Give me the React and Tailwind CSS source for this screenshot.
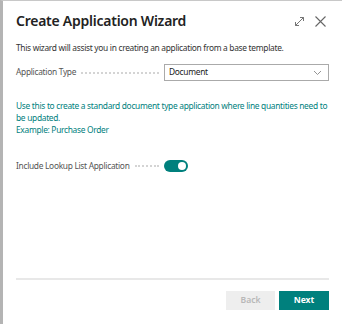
export default function App() {
  return (
    <div
      className="flex h-[324px] w-[342px] flex-col border-l-[3px] border-t border-l-[#b4b4b4] border-t-[#c8c8c8] bg-white pl-[13px] pr-[13px] text-[#212121]"
      style={{ fontFamily: '"Noto Sans", "Open Sans", sans-serif' }}
    >
      <div className="flex h-[38px] items-center justify-between pt-[2px]">
        <h1 className="text-[14px] font-semibold leading-none tracking-[-0.25px] text-[#222]">
          Create Application Wizard
        </h1>
        <div className="flex items-center gap-[9px] pr-[2px] text-[#666]">
          <svg width="11" height="11" viewBox="0 0 11 11" fill="none" stroke="currentColor" strokeWidth="0.9">
            <path d="M1.5 9.5 L9.5 1.5 M6 1.5 H9.5 V5 M1.5 6 V9.5 H5" />
          </svg>
          <svg width="13" height="13" viewBox="0 0 13 13" fill="none" stroke="currentColor" strokeWidth="1.1">
            <path d="M1.5 1.5 L11.5 11.5 M11.5 1.5 L1.5 11.5" />
          </svg>
        </div>
      </div>

      <div className="text-[8.4px] tracking-[-0.3px]">
        <p className="mt-[2px] leading-[14px] text-[#333]">
          This wizard will assist you in creating an application from a base template.
        </p>

        <div className="mt-[9px] flex items-center">
          <span className="text-[#555]">Application Type</span>
          <span className="mx-[5px] flex-1 border-b-2 border-dotted border-[#d4d4d4]" />
          <div className="flex h-[17px] w-[165px] items-center justify-between border border-[#aaa] pl-[4px] pr-[6px]">
            <span className="text-[#222]">Document</span>
            <svg width="9" height="6" viewBox="0 0 9 6" fill="none" stroke="#888" strokeWidth="0.9">
              <path d="M1 1 L4.5 4.5 L8 1" />
            </svg>
          </div>
        </div>

        <div className="mt-[19px] leading-[12px] text-[#00807d]">
          <p>Use this to create a standard document type application where line quantities need to be updated.</p>
          <p>Example: Purchase Order</p>
        </div>

        <div className="mt-[24px] flex items-center">
          <span className="text-[#555]">Include Lookup List Application</span>
          <span className="mx-[5px] flex-1 border-b-2 border-dotted border-[#d4d4d4]" />
          <div className="mr-[141px] flex h-[12px] w-[24px] items-center justify-end rounded-full bg-[#00807d] pr-[2px]">
            <span className="h-[8px] w-[8px] rounded-full bg-white" />
          </div>
        </div>
      </div>

      <div className="flex-1" />

      <div className="border-t-2 border-[#e8e8e8]" />
      <div className="flex justify-end gap-[4px] pt-[11px] pb-[14px] text-[8.6px]">
        <button className="h-[19px] w-[49px] bg-[#eeeeee] font-semibold text-[#b8b8b8]">Back</button>
        <button className="h-[19px] w-[50px] bg-[#00807d] font-bold text-white">Next</button>
      </div>
    </div>
  );
}
